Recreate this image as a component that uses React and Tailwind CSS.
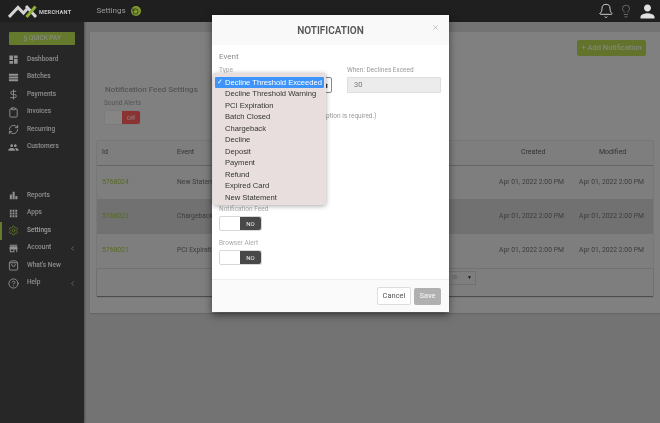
import React from "react";
import { Bell, Lightbulb, DollarSign, RotateCcw, Clipboard, RefreshCw, Settings, ChevronLeft, ShoppingBag, CircleHelp, X } from "lucide-react";

const roboto = { fontFamily: "Roboto, sans-serif" };

const filled = (d) => function FilledIcon({ size, className }) {
  return (
    <svg width={size} height={size} viewBox="0 0 24 24" fill="currentColor" className={className}>
      <path d={d} />
    </svg>
  );
};

const DashboardIcon = filled("M3 13h8V3H3v10zm0 8h8v-6H3v6zm10 0h8V11h-8v10zm0-18v6h8V3h-8z");
const RowsIcon = filled("M2 4h20v4H2zM2 10h20v4H2zM2 16h20v4H2z");
const GroupIcon = filled("M16 11c1.66 0 2.99-1.34 2.99-3S17.66 5 16 5c-1.66 0-3 1.34-3 3s1.34 3 3 3zm-8 0c1.66 0 2.99-1.34 2.99-3S9.66 5 8 5C6.34 5 5 6.34 5 8s1.34 3 3 3zm0 2c-2.33 0-7 1.17-7 3.5V19h14v-2.5c0-2.33-4.67-3.5-7-3.5zm8 0c-.29 0-.62.02-.97.05 1.16.84 1.97 1.97 1.97 3.45V19h6v-2.5c0-2.33-4.67-3.5-7-3.5z");
const BarsIcon = filled("M4 10h4.5v10H4zM10 4h4.5v16H10zM16 13h4.5v7H16z");
const AppsIcon = filled("M4 8h4V4H4v4zm6 12h4v-4h-4v4zm-6 0h4v-4H4v4zm0-6h4v-4H4v4zm6 0h4v-4h-4v4zm6-10v4h4V4h-4zm-6 4h4V4h-4v4zm6 6h4v-4h-4v4zm0 6h4v-4h-4v4z");
const StoreIcon = filled("M20 4H4v2h16V4zm1 10v-2l-1-5H4l-1 5v2h1v6h10v-6h4v6h2v-6h1zm-9 4H6v-4h6v4z");
const PersonIcon = filled("M12 12c2.21 0 4-1.79 4-4s-1.79-4-4-4-4 1.79-4 4 1.79 4 4 4zm0 2c-2.67 0-8 1.34-8 4v2h16v-2c0-2.66-5.33-4-8-4z");

const top = [
  ["Dashboard", DashboardIcon],
  ["Batches", RowsIcon],
  ["Payments", DollarSign],
  ["Invoices", Clipboard],
  ["Recurring", RefreshCw],
  ["Customers", GroupIcon],
];
const bottom = [
  ["Reports", BarsIcon],
  ["Apps", AppsIcon],
  ["Settings", Settings, false, true],
  ["Account", StoreIcon, true],
  ["What's New", ShoppingBag],
  ["Help", CircleHelp, true],
];

function NavItem({ label, Icon, chevron, active }) {
  return (
    <div className={`relative flex h-[17.5px] items-center pl-[8px] pr-[8px] ${active ? "text-white" : "text-[#e8e8e8]"}`}>
      {active && <span className="absolute left-0 top-0 h-full w-[2px] bg-[#a8cc4a]" />}
      <Icon size={11} className={`mr-[8px] shrink-0 ${active ? "text-[#98b83f]" : "text-[#f4f4f4]"}`} />
      <span className="flex-1 text-[6.5px] font-medium">{label}</span>
      {chevron && <ChevronLeft size={7} strokeWidth={2} />}
    </div>
  );
}

function Toggle({ label, off, dim }) {
  return (
    <div>
      <div className={`text-[6.5px] leading-[8px] ${dim ? "text-[#8e8e8e]" : "text-[#aaa]"}`}>{label}</div>
      <div className={`mt-[3px] flex h-[15px] rounded-[2px] border ${off ? "w-[37px] border-[#cfcfcf] bg-[#dedede]" : "w-[43px] border-[#d8d8d8] bg-white"}`}>
        <div className="flex-1" />
        <div className={`flex items-center justify-center rounded-r-[2px] text-[6px] ${off ? "w-[18px] bg-[#e85555] text-[#e4e4e4]" : "w-[21px] bg-[#484848] text-[#eee]"}`}>
          {off ? "Off" : "NO"}
        </div>
      </div>
    </div>
  );
}

const rows = [
  ["5768024", "New Statement", "bg-[#d2d2d2]", "h-[33px]"],
  ["5768023", "Chargeback", "bg-[#bdbdbd]", "h-[35px]"],
  ["5768021", "PCI Expiration", "bg-[#d2d2d2]", "h-[34px]"],
];

const options = [
  "Decline Threshold Exceeded", "Decline Threshold Warning", "PCI Expiration", "Batch Closed", "Chargeback",
  "Decline", "Deposit", "Payment", "Refund", "Expired Card", "New Statement",
];

export default function App() {
  return (
    <div className="relative h-[423px] w-[660px] overflow-hidden bg-[#c0c0c0] blur-[0.55px]" style={roboto}>
      <div className="h-[22px]" />

      <div className="flex h-[401px]">
        <aside className="w-[84px] shrink-0 bg-[#414141] shadow-[1px_0_2px_rgba(0,0,0,.3)]">
          <div className="mx-[9px] mt-[10px] mb-[6px] flex h-[13px] items-center justify-center rounded-[1px] bg-[#a8cc4a] text-[6.5px] text-[#e8e8e8]">
            <span className="text-[7.5px]">$</span>&nbsp;QUICK PAY
          </div>
          {top.map(([l, I]) => <NavItem key={l} label={l} Icon={I} />)}
          <div className="h-[31px]" />
          {bottom.map(([l, I, c, a]) => <NavItem key={l} label={l} Icon={I} chevron={c} active={a} />)}
        </aside>

        <main className="flex-1 pl-[6px] pt-[10px]">
          <section className="h-[281px] bg-[#d5d5d5] px-[7px] pt-[8px] shadow-[0_1px_1px_rgba(0,0,0,.1)]">
            <div className="flex h-[16px] justify-end pr-[7px]">
              <button className="h-[16px] w-[69px] rounded-[2px] bg-[#a6c04a] text-[7.5px] text-[#e4e4e4]">+ Add Notification</button>
            </div>
            <div className="ml-[8px] mt-[29px] text-[8px] font-medium leading-[10px] text-[#8e8e8e]">Notification Feed Settings</div>
            <div className="ml-[7px] mt-[4px]"><Toggle label="Sound Alerts" off dim /></div>
            <div className="mt-[15.5px] bg-[#d2d2d2] shadow-[0_0_1px_rgba(0,0,0,.4)]">
              <div className="flex h-[25px] items-center border-b border-[#a8a8a8] text-[7px] text-[#555]">
                <span className="w-[80px] pl-[5px]">Id</span>
                <span className="flex-1">Event</span>
                <span className="w-[78px]">Created</span>
                <span className="w-[54px]">Modified</span>
              </div>
              {rows.map(([id, ev, bg, h]) => (
                <div key={id} className={`flex items-center text-[6.8px] text-[#666] ${bg} ${h}`}>
                  <span className="w-[80px] pl-[5px] text-[#8fb03a]">{id}</span>
                  <span className="flex-1">{ev}</span>
                  <span className="w-[80px]">Apr 01, 2022 2:00 PM</span>
                  <span className="w-[74px]">Apr 01, 2022 2:00 PM</span>
                </div>
              ))}
              <div className="flex h-[28px] items-start justify-end border-t border-[#bcbcbc] pr-[177px] pt-[2px] shadow-[0_1px_1px_rgba(0,0,0,.35)]">
                <div className="flex h-[14px] w-[28px] items-center justify-between border border-[#bcbcbc] px-[3px] text-[5px] text-[#999]">
                  <span>50</span>
                  <span className="text-[5px] text-[#222]">▼</span>
                </div>
              </div>
            </div>
          </section>
        </main>
      </div>

      {/* dim layer */}
      <div className="absolute inset-0 bg-black/40" />

      {/* top bar stays above the dim layer */}
      <header className="absolute inset-x-0 top-0 flex h-[22px] items-center bg-[#1f1f1f] pl-[8px] pr-[2.5px]">
        <svg width="30" height="16" viewBox="0 0 30 16" className="shrink-0" fill="none" strokeWidth="3">
          <path d="M1 14 L10 4.5 L15.5 10 L19 6" stroke="#d4d4d4" />
          <path d="M18 3 L28 14" stroke="#d4d4d4" />
          <path d="M18.5 14 L27.5 3.5" stroke="#8fae35" />
        </svg>
        <span className="ml-[1px] mt-[3px] text-[5.6px] font-bold tracking-[0.25px] text-[#c8c8c8]">MERCHANT</span>
        <span className="ml-[25px] text-[8px] text-[#9a9a9a]">Settings</span>
        <span className="ml-[5px] flex h-[10px] w-[10px] items-center justify-center rounded-full bg-[#7f9a2c]">
          <RotateCcw size={7} strokeWidth={2.5} className="text-[#222]" />
        </span>
        <div className="flex-1" />
        <Bell size={16} strokeWidth={1.3} className="text-[#e8e8e8]" />
        <Lightbulb size={14} strokeWidth={1} className="ml-[5px] text-[#9a9a9a]" />
        <PersonIcon size={21} className="ml-[4px] text-[#e0e0e0]" />
      </header>

      {/* modal */}
      <div className="absolute left-[212px] top-[15px] flex h-[297px] w-[237px] flex-col bg-white shadow-[0_3px_8px_rgba(0,0,0,.5)]">
        <div className="relative flex h-[30px] items-center justify-center bg-[#f9f9f9] text-[10px] font-semibold text-[#555]">
          NOTIFICATION
          <X size={7} strokeWidth={3} className="absolute right-[10px] top-[9px] text-[#bbb]" />
        </div>
        <div className="relative flex-1 px-[7px] pt-[7px]">
          <div className="text-[8px] leading-[10px] text-[#8a8a8a]">Event</div>
          <div className="mt-[4px] flex">
            <div className="w-[128px]">
              <div className="text-[6.5px] leading-[8px] text-[#aaa]">Type</div>
              <div className="mt-[3px] flex h-[16px] w-[113px] items-center justify-end rounded-[2px] border border-[#888] pr-[2px] text-[6px] text-[#333]">⬍</div>
            </div>
            <div className="flex-1">
              <div className="text-[6.5px] leading-[8px] text-[#999]">When: Declines Exceed</div>
              <div className="mt-[3px] flex h-[16px] w-[94px] items-center rounded-[1px] border border-[#ddd] bg-[#ececec] pl-[6px] text-[7.5px] text-[#777]">30</div>
            </div>
          </div>
          <div className="mt-[19px] pl-[107px] text-[6.5px] leading-[8px] text-[#999]">ption is required.)</div>
          <div className="mt-[85px]"><Toggle label="Notification Feed" /></div>
          <div className="mt-[8px]"><Toggle label="Browser Alert" /></div>
        </div>
        <div className="flex h-[33px] items-center justify-end gap-[3px] border-t border-[#eee] bg-[#fafafa] pr-[8px]">
          <button className="h-[18px] w-[34px] rounded-[2px] border border-[#ddd] bg-white text-[7.5px] text-[#555]">Cancel</button>
          <button className="h-[17px] w-[27px] rounded-[2px] bg-[#b0b0b0] text-[7.5px] font-medium text-[#eee]">Save</button>
        </div>
      </div>

      {/* native select menu */}
      <div className="absolute left-[213px] top-[73px] w-[113px] rounded-[3px] bg-[#e8dede] px-[2px] pb-[2px] pt-[3.5px] text-[7.6px] text-[#333] shadow-[0_1px_5px_rgba(0,0,0,.35)]" style={{ fontFamily: "'Liberation Sans', sans-serif" }}>
        {options.map((o, i) => (
          <div key={o} className={`flex h-[11.5px] items-center whitespace-nowrap rounded-[1px] ${i === 0 ? "bg-[#3e94fa] text-white" : ""}`}>
            <span className="w-[10px] pl-[2px] text-[7px]">{i === 0 ? "✓" : ""}</span>
            {o}
          </div>
        ))}
      </div>
    </div>
  );
}
